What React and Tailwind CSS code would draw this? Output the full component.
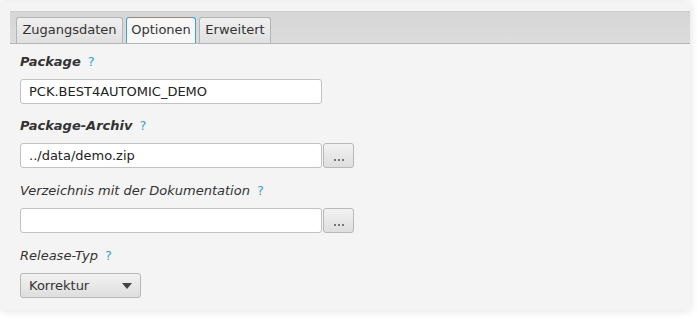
import React from 'react';

const font = { fontFamily: '"DejaVu Sans", "Liberation Sans", sans-serif' };

function Help() {
  return <span className="ml-[7px] text-[13px] text-[#3c9fd6] not-italic font-normal">?</span>;
}

function Label({ text, bold }) {
  return (
    <div className={`h-[16px] leading-[16px] text-[13px] italic text-[#333333] ${bold ? 'font-bold' : ''}`}>
      {text}
      <Help />
    </div>
  );
}

function TextInput({ value, browse }) {
  return (
    <div className="flex mt-[9px]">
      <div className="w-[302px] h-[25px] bg-white border border-[#c2c2c2] rounded-[3px] pl-[8px] text-[13px] leading-[23px] text-[#222222]">
        {value}
      </div>
      {browse && (
        <div className="ml-[1px] w-[31px] h-[25px] rounded-[3px] border border-[#b8b8b8] bg-gradient-to-b from-[#f2f2f2] to-[#dedede] flex items-end justify-center pb-[6px] gap-[2px]">
          <span className="w-[2px] h-[2px] bg-[#777777]" />
          <span className="w-[2px] h-[2px] bg-[#777777]" />
          <span className="w-[2px] h-[2px] bg-[#777777]" />
        </div>
      )}
    </div>
  );
}

function Tab({ label, active, width }) {
  return (
    <div
      className={`h-[26px] rounded-t-[3px] border border-b-0 text-[13px] leading-[24px] text-center ${
        active
          ? 'bg-[#f7f7f7] border-[#3ca3d6] text-[#333333]'
          : 'bg-gradient-to-b from-[#f0f0f0] to-[#e0e0e0] border-[#b3b3b3] text-[#333333]'
      }`}
      style={{ width }}
    >
      {label}
    </div>
  );
}

export default function App() {
  return (
    <div className="w-[700px] h-[319px] bg-white overflow-hidden" style={font}>
      <div className="mt-[2px] w-[690px] h-[308px] bg-[#f4f4f4] shadow-[0_0_9px_rgba(0,0,0,0.14)]">
        {/* Tab header */}
        <div className="pt-[9px] pl-[10px]">
          <div className="h-[33px] bg-gradient-to-b from-[#d6d6d6] to-[#dcdcdc] border-t border-[#cdcdcd] border-b border-b-[#b5b5b5] flex items-end pl-[6px] gap-[3px]">
            <Tab label="Zugangsdaten" width={107} />
            <Tab label="Optionen" active width={70} />
            <Tab label="Erweitert" width={72} />
          </div>
        </div>

        {/* Content */}
        <div className="pl-[20px] pt-[10px]">
          <Label text="Package" bold />
          <TextInput value="PCK.BEST4AUTOMIC_DEMO" />

          <div className="mt-[14px]">
            <Label text="Package-Archiv" bold />
          </div>
          <TextInput value="../data/demo.zip" browse />

          <div className="mt-[15px]">
            <Label text="Verzeichnis mit der Dokumentation" />
          </div>
          <TextInput value="" browse />

          <div className="mt-[15px]">
            <Label text="Release-Typ" />
          </div>
          <div className="mt-[9px] w-[121px] h-[25px] rounded-[3px] border border-[#b8b8b8] bg-gradient-to-b from-[#f2f2f2] to-[#dedede] flex items-center justify-between pl-[8px] pr-[8px]">
            <span className="text-[13px] text-[#333333]">Korrektur</span>
            <svg width="10" height="6" viewBox="0 0 10 6">
              <path d="M0 0 L10 0 L5 6 Z" fill="#444444" />
            </svg>
          </div>
        </div>
      </div>
    </div>
  );
}
